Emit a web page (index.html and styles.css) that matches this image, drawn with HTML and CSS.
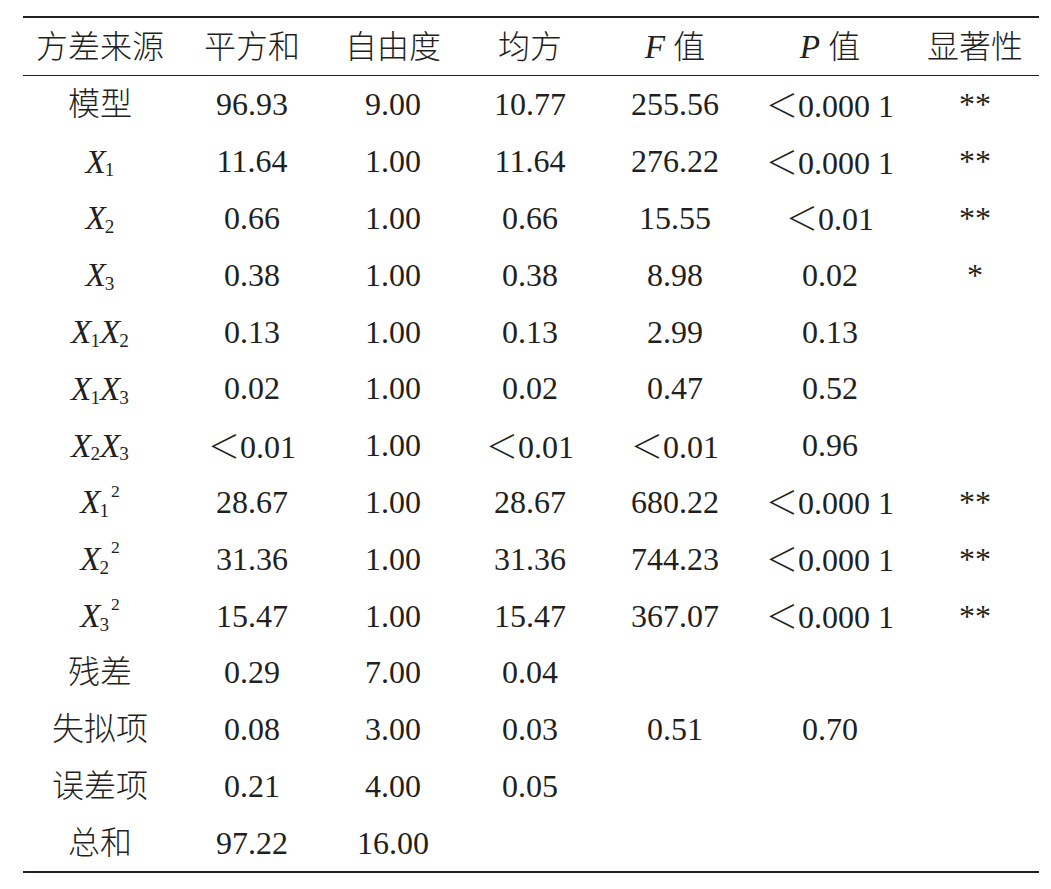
FILE: index.html
```html
<!DOCTYPE html>
<html lang="zh">
<head>
<meta charset="utf-8">
<link rel="stylesheet" href="styles.css">
</head>
<body>
<table class="anova">
  <colgroup>
    <col class="c1"><col class="c2"><col class="c3"><col class="c4"><col class="c5"><col class="c6"><col class="c7">
  </colgroup>
  <thead>
    <tr>
      <th>方差来源</th><th>平方和</th><th>自由度</th><th>均方</th><th><i>F</i> 值</th><th><i>P</i> 值</th><th>显著性</th>
    </tr>
  </thead>
  <tbody>
    <tr><td>模型</td><td>96.93</td><td>9.00</td><td>10.77</td><td>255.56</td><td><span class="lt">＜</span>0.000 1</td><td>**</td></tr>
    <tr><td><i>X</i><sub>1</sub></td><td>11.64</td><td>1.00</td><td>11.64</td><td>276.22</td><td><span class="lt">＜</span>0.000 1</td><td>**</td></tr>
    <tr><td><i>X</i><sub>2</sub></td><td>0.66</td><td>1.00</td><td>0.66</td><td>15.55</td><td><span class="lt">＜</span>0.01</td><td>**</td></tr>
    <tr><td><i>X</i><sub>3</sub></td><td>0.38</td><td>1.00</td><td>0.38</td><td>8.98</td><td>0.02</td><td>*</td></tr>
    <tr><td><i>X</i><sub>1</sub><i>X</i><sub>2</sub></td><td>0.13</td><td>1.00</td><td>0.13</td><td>2.99</td><td>0.13</td><td></td></tr>
    <tr><td><i>X</i><sub>1</sub><i>X</i><sub>3</sub></td><td>0.02</td><td>1.00</td><td>0.02</td><td>0.47</td><td>0.52</td><td></td></tr>
    <tr><td><i>X</i><sub>2</sub><i>X</i><sub>3</sub></td><td><span class="lt">＜</span>0.01</td><td>1.00</td><td><span class="lt">＜</span>0.01</td><td><span class="lt">＜</span>0.01</td><td>0.96</td><td></td></tr>
    <tr><td><i>X</i><sub>1</sub><sup>2</sup></td><td>28.67</td><td>1.00</td><td>28.67</td><td>680.22</td><td><span class="lt">＜</span>0.000 1</td><td>**</td></tr>
    <tr><td><i>X</i><sub>2</sub><sup>2</sup></td><td>31.36</td><td>1.00</td><td>31.36</td><td>744.23</td><td><span class="lt">＜</span>0.000 1</td><td>**</td></tr>
    <tr><td><i>X</i><sub>3</sub><sup>2</sup></td><td>15.47</td><td>1.00</td><td>15.47</td><td>367.07</td><td><span class="lt">＜</span>0.000 1</td><td>**</td></tr>
    <tr><td>残差</td><td>0.29</td><td>7.00</td><td>0.04</td><td></td><td></td><td></td></tr>
    <tr><td>失拟项</td><td>0.08</td><td>3.00</td><td>0.03</td><td>0.51</td><td>0.70</td><td></td></tr>
    <tr><td>误差项</td><td>0.21</td><td>4.00</td><td>0.05</td><td></td><td></td><td></td></tr>
    <tr><td>总和</td><td>97.22</td><td>16.00</td><td></td><td></td><td></td><td></td></tr>
  </tbody>
</table>
</body>
</html>
```

FILE: styles.css
```css
html, body {
  margin: 0;
  padding: 0;
  background: #ffffff;
}

body {
  padding: 16px 0 0 23px;
  color: #231f20;
  font-family: "Liberation Serif", "Noto Sans CJK SC", serif;
  font-size: 32px;
  font-weight: 300;
}

.anova {
  width: 1016px;
  border-collapse: collapse;
  table-layout: fixed;
  border-top: 2px solid #231f20;
  border-bottom: 2px solid #231f20;
}

.c1 { width: 154px; }
.c2 { width: 150px; }
.c3 { width: 132px; }
.c4 { width: 142px; }
.c5 { width: 148px; }
.c6 { width: 162px; }
.c7 { width: 128px; }

.anova th,
.anova td {
  padding: 0;
  text-align: center;
  vertical-align: middle;
  white-space: nowrap;
  line-height: 1;
  font-weight: 300;
}

.anova th {
  height: 57px;
  border-bottom: 1px solid #231f20;
}

.anova td {
  height: 56.8px;
}

.anova i {
  font-style: italic;
  font-size: 1.04em;
}

.anova sub,
.anova sup {
  line-height: 0;
}

.anova sub {
  font-size: 0.6em;
  vertical-align: -0.2em;
  margin-left: -1px;
}

.anova sup {
  font-size: 0.55em;
  vertical-align: 0.95em;
  margin-left: 2px;
}

.lt {
  font-family: "Noto Sans CJK SC", sans-serif;
  font-weight: 300;
}
```
